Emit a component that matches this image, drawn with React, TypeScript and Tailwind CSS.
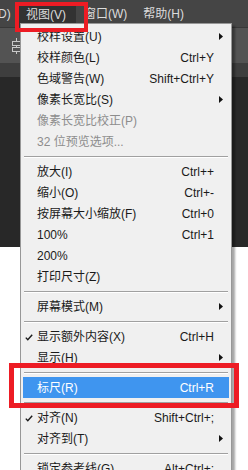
import React from "react";

type Item =
  | { sep: true }
  | {
      sep?: false;
      label: string;
      shortcut?: string;
      sub?: boolean;
      disabled?: boolean;
      checked?: boolean;
      active?: boolean;
    };

const items: Item[] = [
  { label: "校样设置(U)", sub: true },
  { label: "校样颜色(L)", shortcut: "Ctrl+Y" },
  { label: "色域警告(W)", shortcut: "Shift+Ctrl+Y" },
  { label: "像素长宽比(S)", sub: true },
  { label: "像素长宽比校正(P)", disabled: true },
  { label: "32 位预览选项...", disabled: true },
  { sep: true },
  { label: "放大(I)", shortcut: "Ctrl++" },
  { label: "缩小(O)", shortcut: "Ctrl+-" },
  { label: "按屏幕大小缩放(F)", shortcut: "Ctrl+0" },
  { label: "100%", shortcut: "Ctrl+1" },
  { label: "200%" },
  { label: "打印尺寸(Z)" },
  { sep: true },
  { label: "屏幕模式(M)", sub: true },
  { sep: true },
  { label: "显示额外内容(X)", shortcut: "Ctrl+H", checked: true },
  { label: "显示(H)", sub: true },
  { sep: true },
  { label: "标尺(R)", shortcut: "Ctrl+R", active: true },
  { sep: true },
  { label: "对齐(N)", shortcut: "Shift+Ctrl+;", checked: true },
  { label: "对齐到(T)", sub: true },
  { sep: true },
  { label: "锁定参考线(G)", shortcut: "Alt+Ctrl+;" },
];

const font = { fontFamily: '"Liberation Sans", "Noto Sans CJK SC", sans-serif' };

function Check() {
  return (
    <svg width="8" height="7" viewBox="0 0 8 7" className="absolute left-[2px] top-[8px]">
      <path d="M0.8 3.6 L2.8 5.8 L7.2 0.8" fill="none" stroke="#1a1a1a" strokeWidth="1.4" />
    </svg>
  );
}

function Arrow() {
  return (
    <svg width="4" height="7" viewBox="0 0 4 7" className="ml-auto -mr-[9px]">
      <path d="M0 0 L4 3.5 L0 7 Z" fill="#111" />
    </svg>
  );
}

export default function App() {
  return (
    <div
      className="relative w-[248px] h-[470px] overflow-hidden flex flex-col bg-white text-[12px]"
      style={font}
    >
      {/* menu bar */}
      <div className="h-[28px] bg-[#454545] flex items-stretch text-[#dcdcdc] border-b border-[#383838]">
        <span className="w-[20px] -ml-[2px] flex items-center">D)</span>
        <span className="w-[58px] bg-[#323232] flex items-center pl-[8px] mt-[3px]">视图(V)</span>
        <span className="ml-[8px] flex items-center">窗口(W)</span>
        <span className="ml-[16px] flex items-center">帮助(H)</span>
      </div>

      {/* toolbar */}
      <div className="h-[35px] bg-[#535353] flex items-center pl-[12px]">
        <svg width="9" height="16" viewBox="0 0 9 16">
          <path d="M4.5 0 V16" stroke="#c8c8c8" strokeWidth="1" />
          <rect x="0.5" y="3.5" width="8" height="4" fill="#535353" stroke="#c8c8c8" />
          <rect x="0.5" y="9.5" width="8" height="4" fill="#535353" stroke="#c8c8c8" />
        </svg>
      </div>
      <div className="h-[14px] bg-[#3e3e3e]" />
      <div className="h-[170px] bg-[#282828]" />
      <div className="flex-1 bg-white" />

      {/* dropdown */}
      <div className="absolute left-[20px] top-[23px] w-[212px] bg-[#f0f0f0] border border-[#979797] pt-[2px] shadow-[3px_3px_2px_rgba(0,0,0,0.35)]">
        {items.map((it, i) =>
          it.sep ? (
            <div key={i} className="h-[9px] mx-[3px] flex items-center">
              <div className="w-full border-t border-[#a0a0a0] border-b border-b-white" />
            </div>
          ) : (
            <div
              key={i}
              className={
                "relative mx-[2px] h-[21px] flex items-center pl-[14px] pr-[15px] whitespace-nowrap " +
                (it.active
                  ? "bg-[#3f95ef] text-white"
                  : it.disabled
                  ? "text-[#8d8d8d]"
                  : "text-[#1a1a1a]")
              }
            >
              {it.checked && <Check />}
              <span>{it.label}</span>
              {it.shortcut && <span className="ml-auto">{it.shortcut}</span>}
              {it.sub && <Arrow />}
            </div>
          )
        )}
      </div>

      {/* annotation boxes */}
      <div className="absolute left-[15px] top-[2px] w-[73px] h-[30px] border-4 border-[#ed1c24]" />
      <div className="absolute left-[9px] top-[363px] w-[230px] h-[45px] border-[5px] border-[#ed1c24]" />
    </div>
  );
}
